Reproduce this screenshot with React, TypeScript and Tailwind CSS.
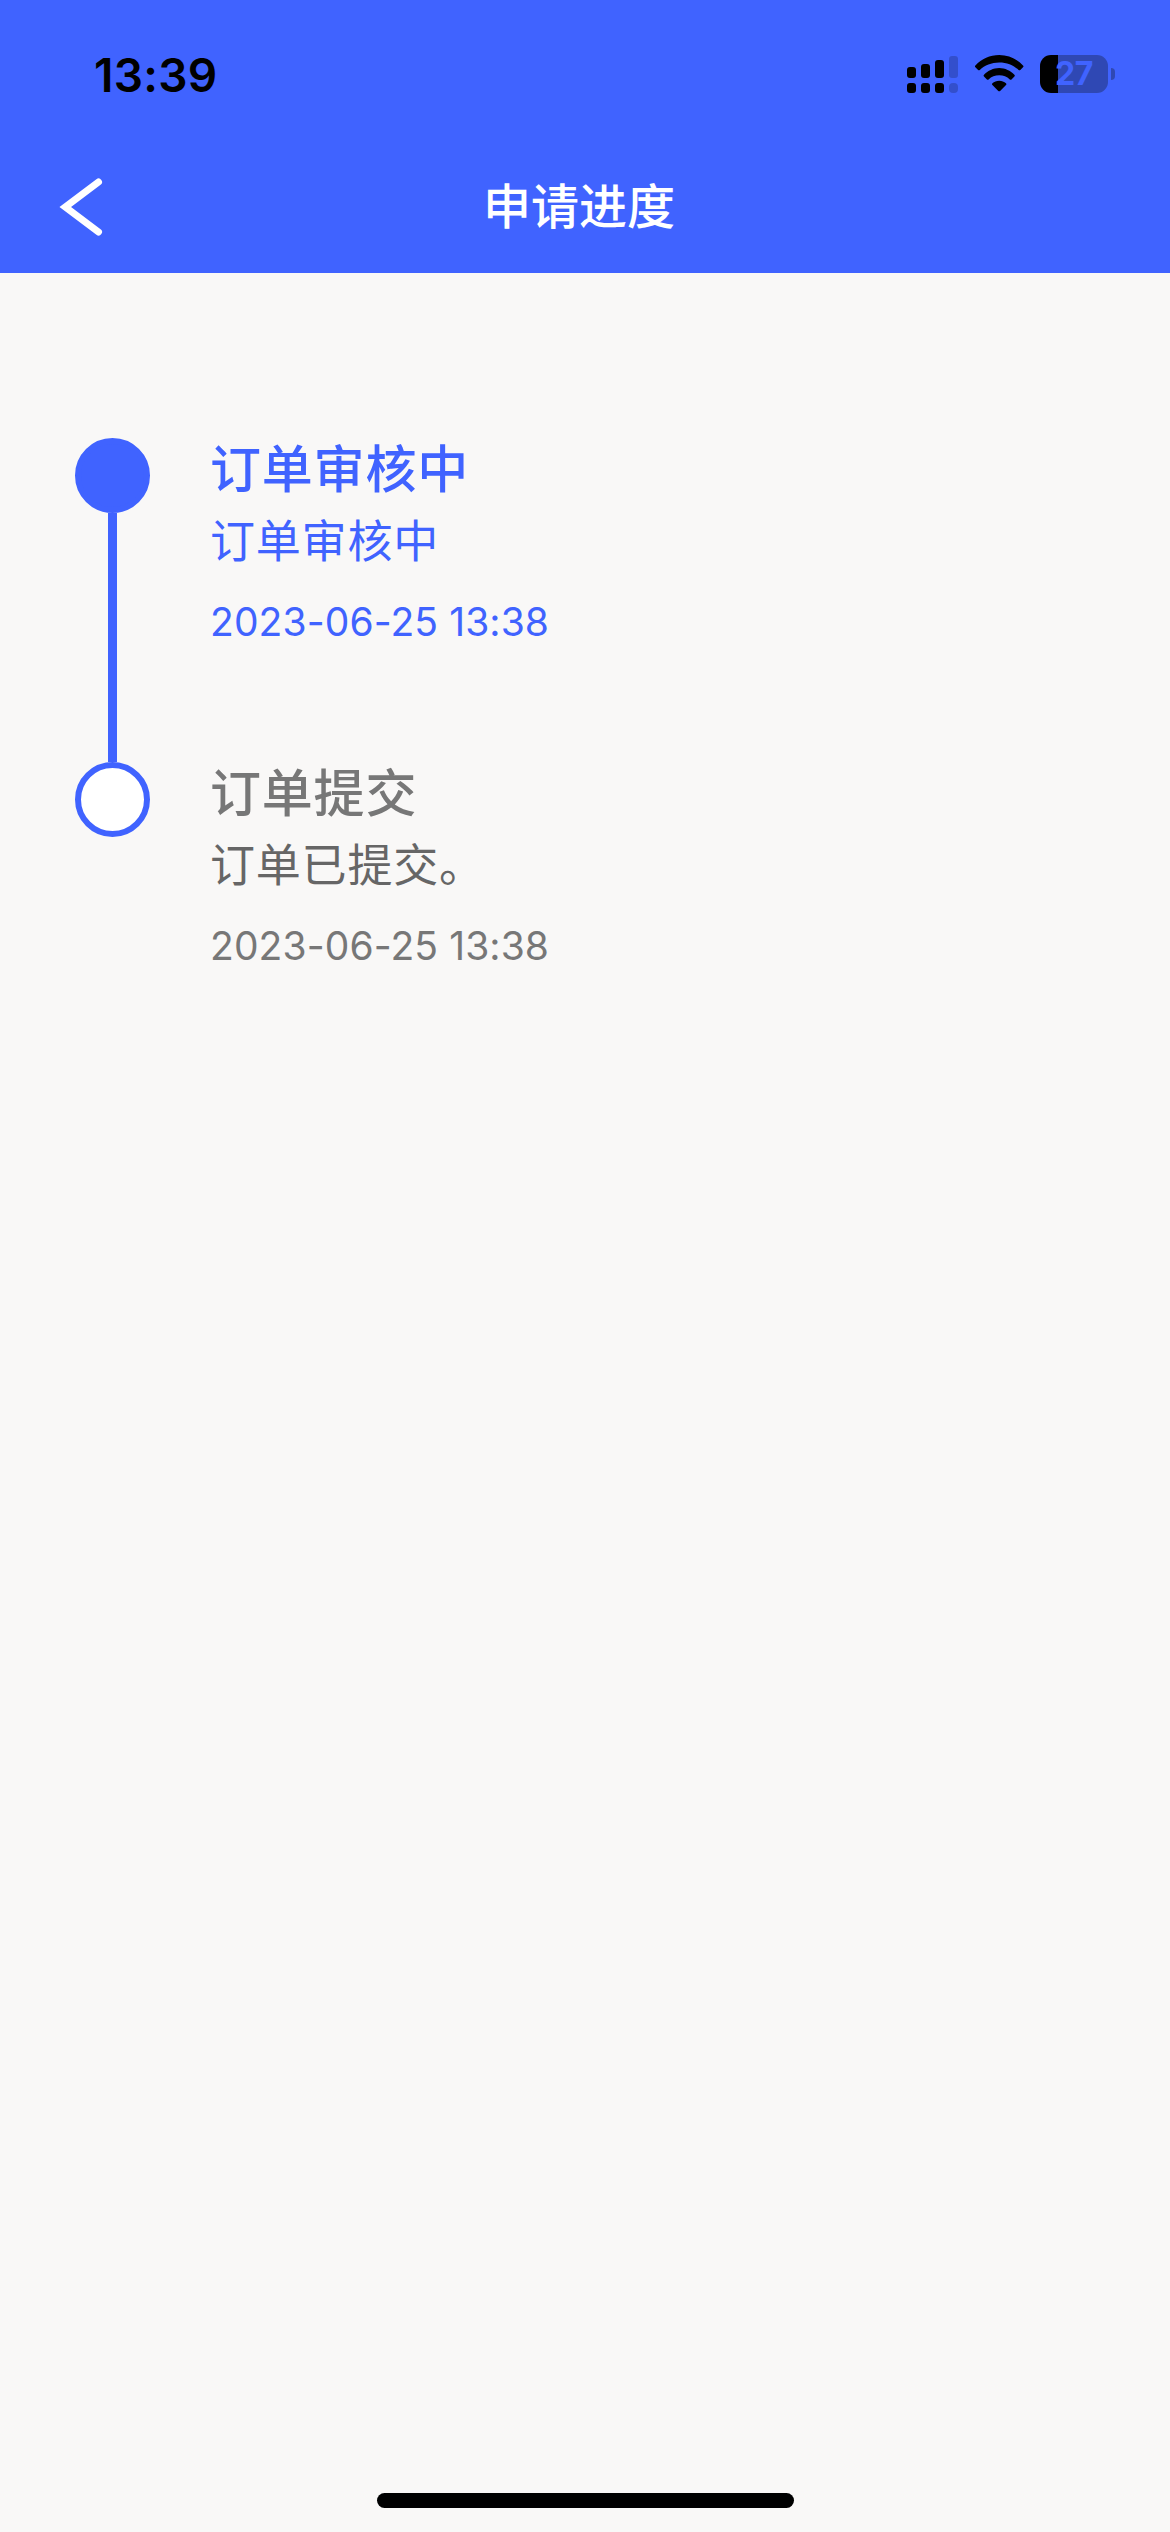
import clsx from 'clsx'

type Step = {
  title: string
  desc: string
  time: string
  active?: boolean
}

const steps: Step[] = [
  { title: '订单审核中', desc: '订单审核中', time: '2023-06-25 13:38', active: true },
  { title: '订单提交', desc: '订单已提交。', time: '2023-06-25 13:38' },
]

function SignalIcon() {
  return (
    <svg width="52" height="38" viewBox="0 0 52 38">
      <rect x="0" y="12" width="9" height="11" rx="3" />
      <rect x="14" y="9" width="9" height="14" rx="3" />
      <rect x="28" y="5" width="9" height="18" rx="3" />
      <rect x="42" y="1" width="9" height="22" rx="3" opacity="0.2" />
      <rect x="0" y="28" width="9" height="10" rx="3" />
      <rect x="14" y="28" width="9" height="10" rx="3" />
      <rect x="28" y="28" width="9" height="10" rx="3" />
      <rect x="42" y="28" width="9" height="10" rx="4" opacity="0.2" />
    </svg>
  )
}

function WifiIcon() {
  return (
    <svg width="49" height="37" viewBox="0 0 49 37">
      <path d="M24.2 7.4C32 7.4 38.6 10.2 43.6 14.9a1.2 1.2 0 0 0 1.7 0L48 12.2a1.2 1.2 0 0 0 0-1.8C41.7 4 33.5 0 24.2 0S6.7 4 .4 10.400a1.2 1.2 0 0 0 0 1.8L3.1 14.9a1.2 1.2 0 0 0 1.7 0C9.8 10.2 16.4 7.4 24.2 7.4Z" />
      <path d="M24.2 20.3c4.2 0 7.7 1.5 10.6 4.1a1.2 1.2 0 0 0 1.7 0l2.9-2.9a1.2 1.2 0 0 0 0-1.8C35.4 15.8 30.2 13 24.2 13S13 15.8 9 19.7a1.2 1.2 0 0 0 0 1.8l2.9 2.9a1.2 1.2 0 0 0 1.7 0c2.9-2.6 6.4-4.1 10.6-4.1Z" />
      <path d="M31 30.1a1.2 1.2 0 0 0 0-1.8C29.2 26.6 26.9 25.7 24.2 25.7s-5 .9-6.8 2.6a1.2 1.2 0 0 0 0 1.8l5.9 5.8a1.3 1.3 0 0 0 1.8 0Z" />
    </svg>
  )
}

function Battery() {
  return (
    <div className="flex items-center">
      <div className="flex h-[38px] w-[68px] items-center justify-center overflow-hidden rounded-[11px] bg-[linear-gradient(to_right,#000_18px,#2f48b4_18px)]">
        <span className="text-[32px] leading-none font-bold tracking-[-0.5px] text-[#4063ff]">27</span>
      </div>
      <div className="ml-[3px] h-[12px] w-[4px] rounded-r-full bg-[#2f48b4]" />
    </div>
  )
}

function StatusBar() {
  return (
    <div className="flex h-[144px] items-start justify-between pt-[50px] pr-[55px] pl-[94px]">
      <span className="text-[46px] leading-[50px] font-semibold tracking-[0.3px]">13:39</span>
      <div className="flex pt-[5px]">
        <SignalIcon />
        <div className="ml-[16px]">
          <WifiIcon />
        </div>
        <div className="ml-[16px]">
          <Battery />
        </div>
      </div>
    </div>
  )
}

function NavBar() {
  return (
    <div className="grid h-[129px] grid-cols-3 items-center px-[60px] pb-[4px]">
      <button className="w-fit" aria-label="返回">
        <svg
          className="overflow-visible"
          width="44"
          height="58"
          viewBox="0 0 44 58"
          fill="none"
          stroke="#fff"
          strokeWidth="7"
          strokeLinecap="round"
        >
          <path d="M38.5 4 5.3 29l33.2 25" />
        </svg>
      </button>
      <h1 className="-ml-[12px] text-center text-[48px] leading-[66px] font-medium whitespace-nowrap text-white">
        申请进度
      </h1>
    </div>
  )
}

function TimelineItem({ step, last }: { step: Step; last: boolean }) {
  return (
    <li className="flex h-[324px]">
      <div className="flex w-[75px] flex-col items-center">
        <span
          className={clsx(
            'size-[75px] shrink-0 rounded-full border-[6px] border-[#4063ff]',
            step.active ? 'bg-[#4063ff]' : 'bg-white',
          )}
        />
        {!last && <span className="w-[9px] grow bg-[#4063ff]" />}
      </div>
      <div className={clsx('ml-[60px]', step.active ? 'text-[#4063ff]' : 'text-[#777]')}>
        <h2 className="text-[51px] leading-[64px] font-medium tracking-[0.8px]">{step.title}</h2>
        <p className={clsx('mt-[10px] text-[45px] leading-[60px] tracking-[0.8px]', !step.active && 'text-[#666]')}>
          {step.desc}
        </p>
        <p className="mt-[26px] text-[39px] leading-[48px] tracking-[0.1px]">{step.time}</p>
      </div>
    </li>
  )
}

export default function App() {
  return (
    <div className="flex h-[2532px] w-[1170px] flex-col bg-[#f9f8f7] font-['Inter','Noto_Sans_CJK_SC',sans-serif] text-black">
      <header className="bg-[#4063ff]">
        <StatusBar />
        <NavBar />
      </header>
      <main className="grow px-[75px] pt-[165px]">
        <ul>
          {steps.map((step, i) => (
            <TimelineItem key={step.title} step={step} last={i === steps.length - 1} />
          ))}
        </ul>
      </main>
      <div className="mx-auto mb-[24px] h-[15px] w-[417px] rounded-full bg-black" />
    </div>
  )
}
